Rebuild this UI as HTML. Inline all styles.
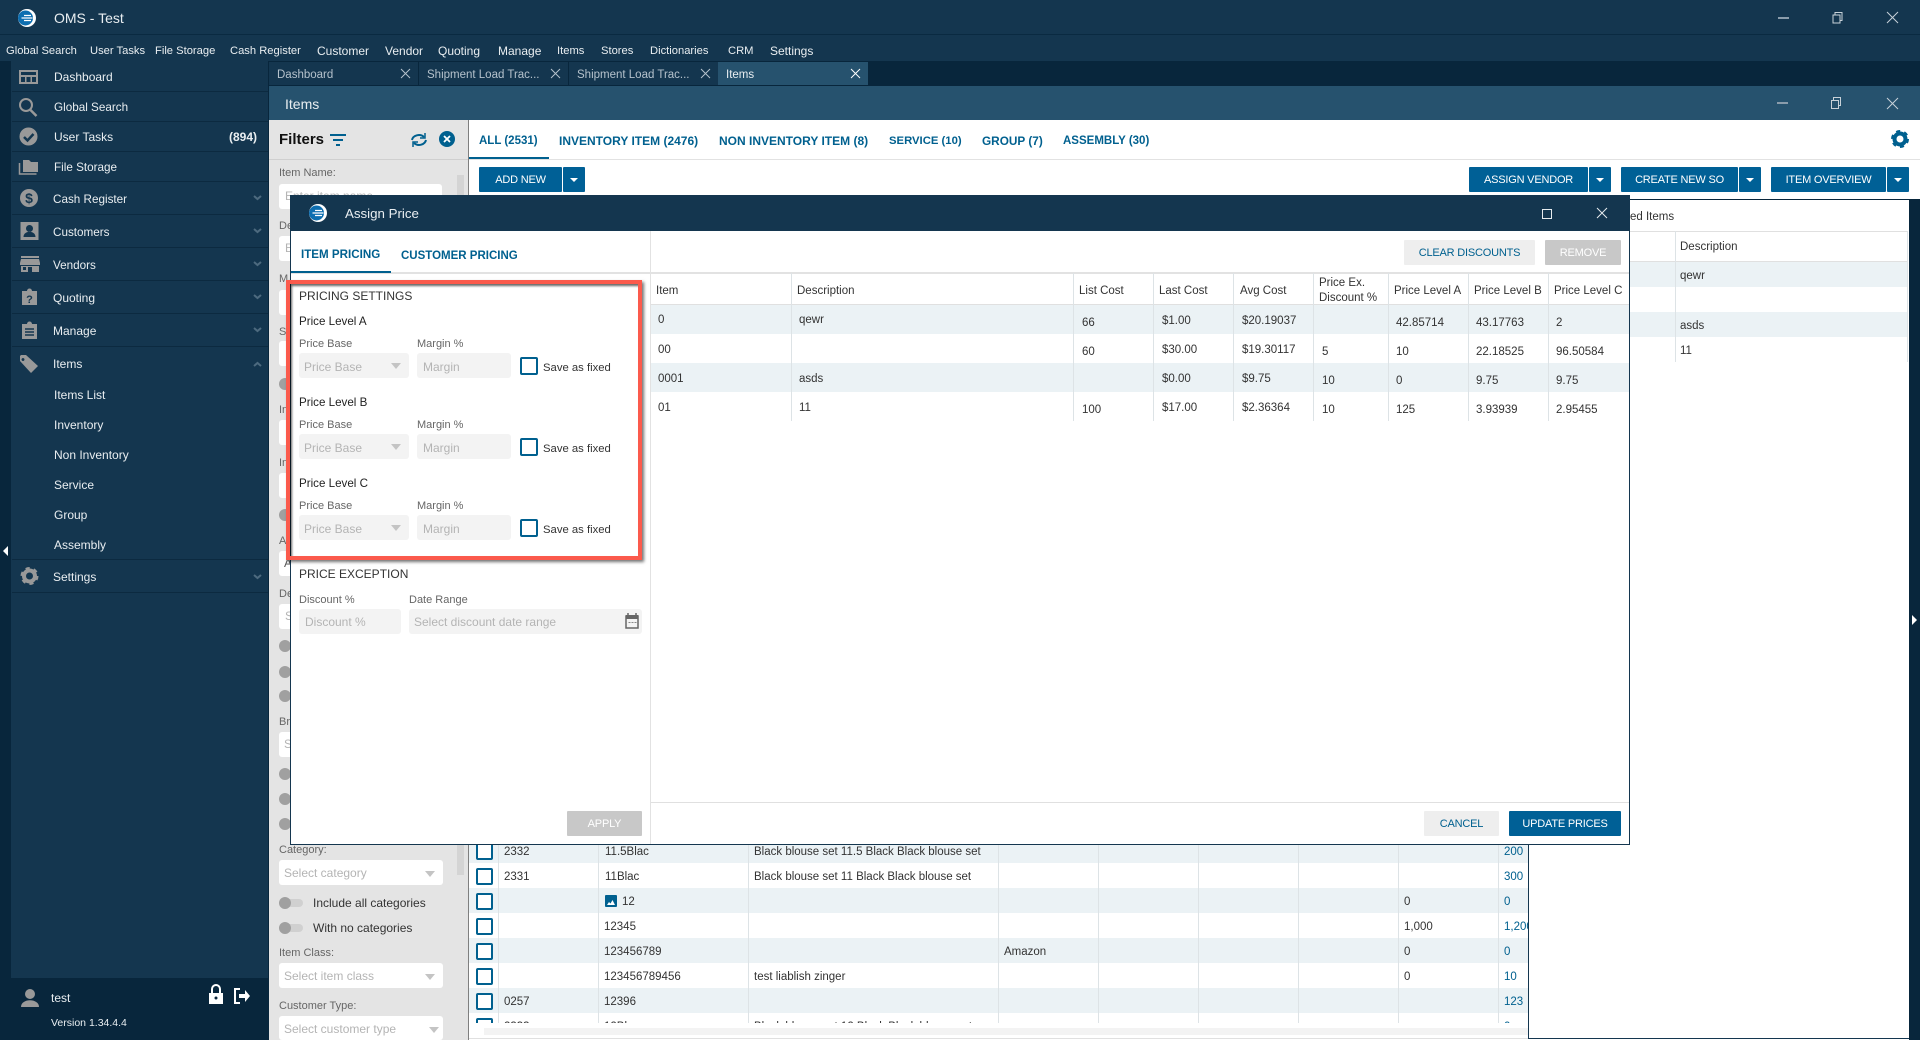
<!DOCTYPE html>
<html><head><meta charset="utf-8"><title>OMS - Test</title>
<style>
*{box-sizing:border-box}
html,body{margin:0;padding:0;width:1920px;height:1040px;overflow:hidden;background:#14364f;font-family:"Liberation Sans",sans-serif;font-size:12px}
.b,.t,svg.a{position:absolute}
.t{white-space:nowrap;line-height:16px;height:16px}
.w{color:#e9eef1}
.m{margin-top:1px;font-size:11.200px}
.mm{margin-top:1px;font-size:12px}
.bl{color:#00608f;margin-top:1px}
.tb{font-weight:bold;font-size:12px}
.g{color:#666;font-size:11px;margin-top:1px}
.d{color:#333;margin-top:1px}
.n{margin-top:0}
.ph{color:#b4b4b4}
.s{font-size:11.500px}
.sf{font-size:11.300px}
.bt{position:absolute;background:#006096;color:#fff;text-align:center;line-height:26px;height:25px;border-radius:1px;white-space:nowrap;font-size:11px;letter-spacing:-.2px}
.car{position:absolute;width:0;height:0;border-left:4px solid transparent;border-right:4px solid transparent;border-top:4px solid #fff}
.arr{position:absolute;width:0;height:0;border-left:5px solid transparent;border-right:5px solid transparent;border-top:6px solid #c4c4c4}
.inp{position:absolute;background:#fff;border-radius:3px;height:25px}
.dis{position:absolute;background:#f3f3f3;border-radius:3px;height:25px}
.cb{position:absolute;width:18px;height:18px;border:2px solid #00608f;border-radius:2px;background:#fff}
.cb2{position:absolute;width:17px;height:17px;border:2px solid #00608f;border-radius:2px;background:#fff}
.k{position:absolute;width:12px;height:12px;border-radius:50%;background:#a0a0a0}
.tr{position:absolute;width:24px;height:8px;border-radius:4px;background:#d0d0d0}
.sep{position:absolute;left:12px;width:256px;height:1px;background:#0c2a40}
.vl{position:absolute;width:1px;background:#dde3e6}
.hl{position:absolute;height:1px;background:#e0e0e0}
.tab{position:absolute;top:62px;height:23px;background:#14364f}
.tt{font-size:11.500px;margin-top:1px}
</style></head><body>

<!-- top bars -->
<div class="b" style="left:0;top:0;width:1920px;height:34px;background:#14364f"></div>
<div class="b" style="left:0;top:34px;width:1920px;height:1px;background:#0a2a41"></div>
<div class="b" style="left:0;top:61px;width:1920px;height:979px;background:#08263c"></div>
<div class="b" style="left:11px;top:61px;width:257px;height:917px;background:#14364f"></div>
<div class="b" style="left:269px;top:86px;width:1651px;height:34px;background:#26526e"></div>

<svg class="a" style="left:17px;top:8px" width="20" height="20" viewBox="0 0 20 20"><circle cx="10" cy="10" r="9" fill="#fff"/><circle cx="8.500" cy="10" r="7.500" fill="#0d6eb0"/><path d="M7 7.500h7M4.500 10h11M7 12.500h7" stroke="#fff" stroke-width="1.200"/></svg>
<div class="t w" style="left:54px;top:10px;font-size:14px">OMS - Test</div>

<svg class="a" style="left:1770px;top:8px" width="140" height="20" viewBox="0 0 140 20" fill="none" stroke="#c8d2d9" stroke-width="1"><path d="M8 10h11" stroke-width="2" stroke="#8a9cab"/><path d="M63 7h7v8h-7zM65 7V4.500h7v8h-2"/><path d="M117 4l11 11M128 4l-11 11"/></svg>

<div class="t w m" style="left:6px;top:42px">Global Search</div>
<div class="t w m" style="left:90px;top:42px">User Tasks</div>
<div class="t w m" style="left:155px;top:42px">File Storage</div>
<div class="t w m" style="left:230px;top:42px">Cash Register</div>
<div class="t w mm" style="left:317px;top:42px">Customer</div>
<div class="t w mm" style="left:385px;top:42px">Vendor</div>
<div class="t w mm" style="left:438px;top:42px">Quoting</div>
<div class="t w mm" style="left:498px;top:42px">Manage</div>
<div class="t w m" style="left:557px;top:42px">Items</div>
<div class="t w m" style="left:601px;top:42px">Stores</div>
<div class="t w m" style="left:650px;top:42px">Dictionaries</div>
<div class="t w m" style="left:728px;top:42px">CRM</div>
<div class="t w mm" style="left:770px;top:42px">Settings</div>

<!-- sidebar -->
<div class="sep" style="top:91px"></div><div class="sep" style="top:121px"></div><div class="sep" style="top:151px"></div><div class="sep" style="top:181px"></div><div class="sep" style="top:214px"></div><div class="sep" style="top:247px"></div><div class="sep" style="top:280px"></div><div class="sep" style="top:313px"></div><div class="sep" style="top:346px"></div><div class="sep" style="top:559px"></div><div class="sep" style="top:592px"></div>

<svg class="a" style="left:0;top:0" width="268" height="620" fill="#999">
<path fill-rule="evenodd" d="M19 70h19v14H19zM21 72v3h15v-3zM21 77v5h4v-5zM26.500 77v5h4v-5zM32 77v5h4v-5z"/>
<circle cx="26" cy="105" r="6" fill="none" stroke="#999" stroke-width="2"/><path d="M30.500 110l6 6" stroke="#999" stroke-width="2.500"/>
<circle cx="28.500" cy="136.500" r="9"/><path d="M24 137l3.500 3.500 6-6.500" fill="none" stroke="#14364f" stroke-width="2.500"/>
<path d="M23 160h6l2 2h7v10H23z"/><path d="M19.500 163v11h17" fill="none" stroke="#999" stroke-width="1.500"/>
<circle cx="29" cy="198" r="9"/><text x="29" y="203" font-size="14" font-weight="bold" fill="#14364f" text-anchor="middle" font-family="Liberation Sans">$</text>
<path fill-rule="evenodd" d="M20.500 222h18v18h-18zM29.500 225a3.500 3.500 0 1 0 .01 0zM23.500 237c0-7 12-7 12 0z"/>
<path d="M21 256h18v2H21zM21 259h18l1 4v2H20v-2z"/><path fill-rule="evenodd" d="M21 266h18v6h-7v-5h-4v5h-7zM23 267v3h3v-3z"/>
<path d="M22 291h5a2 2 0 0 1 5 0h5v14H22z"/><text x="29.500" y="303" font-size="11" fill="#14364f" font-weight="bold" text-anchor="middle" font-family="Liberation Sans">?</text>
<path d="M22 324h5a2 2 0 0 1 5 0h5v15H22z"/><path d="M25 329h9M25 332h9M25 335h9" stroke="#14364f" stroke-width="1.500"/>
<path fill-rule="evenodd" d="M20 356v5l11 12 7-7-12-11h-5zM23 358a1.500 1.500 0 1 0 .01 0z"/>
<circle cx="29.500" cy="576" r="5.500" fill="none" stroke="#999" stroke-width="4"/><circle cx="29.500" cy="576" r="7.500" fill="none" stroke="#999" stroke-width="3" stroke-dasharray="3.900 3.950"/>
<g fill="none" stroke="#4d6a7f" stroke-width="2"><path d="M254 196l3.500 3 3.500-3M254 229l3.500 3 3.500-3M254 262l3.500 3 3.500-3M254 295l3.500 3 3.500-3M254 328l3.500 3 3.500-3M254 366l3.500-3 3.500 3M254 575l3.500 3 3.500-3"/></g>
<path d="M8 546v10l-5-5z" fill="#fff"/>
</svg>

<div class="t w" style="left:54px;top:69px">Dashboard</div>
<div class="t w" style="left:54px;top:100px;font-size:11.700px">Global Search</div>
<div class="t w" style="left:54px;top:129px">User Tasks</div>
<div class="t w" style="left:229px;top:129px;font-weight:bold">(894)</div>
<div class="t w" style="left:54px;top:160px;font-size:11.700px">File Storage</div>
<div class="t w" style="left:53px;top:192px;font-size:11.700px">Cash Register</div>
<div class="t w" style="left:53px;top:225px;font-size:11.700px">Customers</div>
<div class="t w" style="left:53px;top:258px;font-size:11.700px">Vendors</div>
<div class="t w" style="left:53px;top:290px">Quoting</div>
<div class="t w" style="left:53px;top:323px">Manage</div>
<div class="t w" style="left:53px;top:356px">Items</div>
<div class="t w" style="left:54px;top:387px">Items List</div>
<div class="t w" style="left:54px;top:417px">Inventory</div>
<div class="t w" style="left:54px;top:447px">Non Inventory</div>
<div class="t w" style="left:54px;top:477px">Service</div>
<div class="t w" style="left:54px;top:507px">Group</div>
<div class="t w" style="left:54px;top:537px">Assembly</div>
<div class="t w" style="left:53px;top:569px">Settings</div>

<svg class="a" style="left:0;top:970px" width="268" height="70">
<circle cx="30" cy="24" r="5" fill="#999"/><path d="M21 37c0-9 18-9 18 0z" fill="#999"/>
<path d="M212 23v-4a4 4 0 0 1 8 0v4" fill="none" stroke="#fff" stroke-width="2"/><path d="M209 23h14v11h-14z" fill="#fff"/><circle cx="216" cy="28" r="1.500" fill="#08263c"/>
<path d="M240 19h-5v14h5" fill="none" stroke="#fff" stroke-width="2"/><path d="M239 24h6v-4l5 6-5 6v-4h-6z" fill="#fff"/>
</svg>
<div class="t w" style="left:51px;top:990px;font-size:12px">test</div>
<div class="t w" style="left:51px;top:1015px;font-size:10.500px">Version 1.34.4.4</div>

<!-- tabs -->
<div class="tab" style="left:269px;width:149px"></div>
<div class="tab" style="left:419px;width:149px"></div>
<div class="tab" style="left:569px;width:149px"></div>
<div class="tab" style="left:718px;width:150px;background:#26526e"></div>
<div class="t tt" style="left:277px;top:66px;color:#b5c2cc">Dashboard</div>
<div class="t tt" style="left:427px;top:66px;color:#b5c2cc">Shipment Load Trac...</div>
<div class="t tt" style="left:577px;top:66px;color:#b5c2cc">Shipment Load Trac...</div>
<div class="t w tt" style="left:726px;top:66px">Items</div>
<svg class="a" style="left:400px;top:68px" width="470" height="12" fill="none" stroke="#b5c2cc"><path d="M1 1l9 9M10 1l-9 9M151 1l9 9M160 1l-9 9M301 1l9 9M310 1l-9 9"/><path d="M451 1l9 9M460 1l-9 9" stroke="#fff"/></svg>
<div class="t w" style="left:285px;top:96px;font-size:14px">Items</div>
<svg class="a" style="left:1770px;top:93px" width="140" height="20" fill="none" stroke="#c8d2d9"><path d="M7 10h11" stroke-width="2" stroke="#8a9cab"/><path d="M61.500 7.500h7v8h-7zM63.500 7V4.500h7v8h-2"/><path d="M117 5l11 11M128 5l-11 11"/></svg>

<!-- filter panel -->
<div class="b" style="left:269px;top:120px;width:199px;height:920px;background:#e4e4e4"></div>
<div class="b" style="left:269px;top:159px;width:199px;height:1px;background:#cfcfcf"></div>
<div class="b" style="left:468px;top:120px;width:1px;height:920px;background:#7f7f7f"></div>
<div class="t" style="left:279px;top:132px;font-size:15px;font-weight:bold;color:#111">Filters</div>
<svg class="a" style="left:330px;top:133px" width="18" height="14" stroke="#00608f" stroke-width="2"><path d="M0 2h16M3 7h10M6 12h4"/></svg>
<svg class="a" style="left:410px;top:131px" width="18" height="18" fill="none" stroke="#00608f" stroke-width="2"><path d="M2 9a7 6 0 0 1 12-3M16 9a7 6 0 0 1-12 3"/><path d="M15 2v5h-5M3 16v-5h5" stroke-width="1.500"/></svg>
<svg class="a" style="left:439px;top:131px" width="16" height="16"><circle cx="8" cy="8" r="8" fill="#00608f"/><path d="M5 5l6 6M11 5l-6 6" stroke="#fff" stroke-width="1.800"/></svg>
<div class="t g" style="left:279px;top:164px">Item Name:</div>
<div class="inp" style="left:279px;top:184px;width:163px"></div>
<div class="t ph" style="left:285px;top:188px">Enter item name</div>
<div class="b" style="left:457px;top:175px;width:7px;height:700px;background:#d4d4d4"></div>
<div class="t g" style="left:279px;top:217px">De</div><div class="inp" style="left:279px;top:236px;width:163px"></div><div class="t ph" style="left:285px;top:240px">E</div>
<div class="t g" style="left:279px;top:270px">M</div><div class="inp" style="left:279px;top:290px;width:163px"></div>
<div class="t g" style="left:279px;top:323px">S</div><div class="inp" style="left:279px;top:341px;width:163px"></div>
<div class="k" style="left:279px;top:378px"></div>
<div class="t g" style="left:279px;top:401px">In</div><div class="inp" style="left:279px;top:420px;width:163px"></div>
<div class="t g" style="left:279px;top:454px">In</div><div class="inp" style="left:279px;top:473px;width:163px"></div>
<div class="k" style="left:279px;top:509px"></div>
<div class="t g" style="left:279px;top:532px">A</div><div class="inp" style="left:279px;top:551px;width:163px"></div><div class="t" style="left:284px;top:555px;color:#555">A</div>
<div class="t g" style="left:279px;top:585px">De</div><div class="inp" style="left:279px;top:604px;width:163px"></div><div class="t ph" style="left:285px;top:608px">S</div>
<div class="k" style="left:279px;top:640px"></div><div class="k" style="left:279px;top:666px"></div><div class="k" style="left:279px;top:690px"></div>
<div class="t g" style="left:279px;top:713px">Br</div><div class="inp" style="left:279px;top:732px;width:163px"></div><div class="t ph" style="left:284px;top:736px">S</div>
<div class="k" style="left:279px;top:768px"></div><div class="k" style="left:279px;top:793px"></div><div class="k" style="left:279px;top:818px"></div>
<div class="t g" style="left:279px;top:841px">Category:</div>
<div class="inp" style="left:279px;top:860px;width:164px"></div><div class="t ph" style="left:284px;top:865px">Select category</div><div class="arr" style="left:425px;top:871px"></div>
<div class="tr" style="left:279px;top:899px"></div><div class="k" style="left:279px;top:897px"></div><div class="t d n" style="left:313px;top:895px">Include all categories</div>
<div class="tr" style="left:279px;top:924px"></div><div class="k" style="left:279px;top:922px"></div><div class="t d n" style="left:313px;top:920px">With no categories</div>
<div class="t g" style="left:279px;top:944px">Item Class:</div>
<div class="inp" style="left:279px;top:963px;width:164px"></div><div class="t ph" style="left:284px;top:968px">Select item class</div><div class="arr" style="left:425px;top:974px"></div>
<div class="t g" style="left:279px;top:997px">Customer Type:</div>
<div class="inp" style="left:279px;top:1016px;width:164px;height:24px"></div><div class="t ph" style="left:284px;top:1021px">Select customer type</div><div class="arr" style="left:429px;top:1027px"></div>

<!-- main white -->
<div class="b" style="left:469px;top:120px;width:1451px;height:920px;background:#fff"></div>
<div class="b" style="left:469px;top:159px;width:1451px;height:1px;background:#e2e2e2"></div>
<div class="b" style="left:469px;top:157px;width:80px;height:2px;background:#00608f"></div>
<div class="t bl tb" style="left:479px;top:132px;font-size:11.500px">ALL (2531)</div>
<div class="t bl tb" style="left:559px;top:132px">INVENTORY ITEM (2476)</div>
<div class="t bl tb" style="left:719px;top:132px">NON INVENTORY ITEM (8)</div>
<div class="t bl tb" style="left:889px;top:132px;font-size:11.300px">SERVICE (10)</div>
<div class="t bl tb" style="left:982px;top:132px;font-size:11.800px">GROUP (7)</div>
<div class="t bl tb" style="left:1063px;top:132px;font-size:11.500px">ASSEMBLY (30)</div>
<svg class="a" style="left:1890px;top:129px" width="20" height="20"><circle cx="10" cy="10" r="5.500" fill="none" stroke="#00608f" stroke-width="4"/><circle cx="10" cy="10" r="7.500" fill="none" stroke="#00608f" stroke-width="3" stroke-dasharray="3.900 3.950"/></svg>

<div class="bt" style="left:479px;top:167px;width:83px">ADD NEW</div><div class="bt" style="left:563px;top:167px;width:22px"></div><div class="car" style="left:570px;top:178px"></div>
<div class="bt" style="left:1469px;top:167px;width:119px">ASSIGN VENDOR</div><div class="bt" style="left:1589px;top:167px;width:22px"></div><div class="car" style="left:1596px;top:178px"></div>
<div class="bt" style="left:1621px;top:167px;width:117px">CREATE NEW SO</div><div class="bt" style="left:1739px;top:167px;width:22px"></div><div class="car" style="left:1746px;top:178px"></div>
<div class="bt" style="left:1771px;top:167px;width:115px">ITEM OVERVIEW</div><div class="bt" style="left:1887px;top:167px;width:22px"></div><div class="car" style="left:1894px;top:178px"></div>

<!-- lower table -->
<div class="b" style="left:0;top:0;width:1528px;height:1023px;overflow:hidden">
<div class="b" style="left:469px;top:838px;width:1059px;height:25px;background:#ebf2f5"></div>
<div class="b" style="left:469px;top:888px;width:1059px;height:25px;background:#ebf2f5"></div>
<div class="b" style="left:469px;top:938px;width:1059px;height:25px;background:#ebf2f5"></div>
<div class="b" style="left:469px;top:988px;width:1059px;height:25px;background:#ebf2f5"></div>
<div class="vl" style="left:498px;top:838px;height:190px"></div><div class="vl" style="left:598px;top:838px;height:190px"></div><div class="vl" style="left:748px;top:838px;height:190px"></div><div class="vl" style="left:998px;top:838px;height:190px"></div><div class="vl" style="left:1098px;top:838px;height:190px"></div><div class="vl" style="left:1198px;top:838px;height:190px"></div><div class="vl" style="left:1298px;top:838px;height:190px"></div><div class="vl" style="left:1398px;top:838px;height:190px"></div><div class="vl" style="left:1498px;top:838px;height:190px"></div>
<div class="cb2" style="left:476px;top:843px"></div><div class="cb2" style="left:476px;top:868px"></div><div class="cb2" style="left:476px;top:893px"></div><div class="cb2" style="left:476px;top:918px"></div><div class="cb2" style="left:476px;top:943px"></div><div class="cb2" style="left:476px;top:968px"></div><div class="cb2" style="left:476px;top:993px"></div><div class="cb2" style="left:476px;top:1018px"></div>
<div class="t d s" style="left:504px;top:843px">2332</div><div class="t d s" style="left:605px;top:843px">11.5Blac</div><div class="t d s" style="left:754px;top:843px">Black blouse set 11.5 Black Black blouse set</div><div class="t bl s" style="left:1504px;top:843px">200</div>
<div class="t d s" style="left:504px;top:868px">2331</div><div class="t d s" style="left:605px;top:868px">11Blac</div><div class="t d s" style="left:754px;top:868px">Black blouse set 11 Black Black blouse set</div><div class="t bl s" style="left:1504px;top:868px">300</div>
<svg class="a" style="left:605px;top:895px" width="12" height="12"><rect width="12" height="12" rx="1" fill="#00608f"/><path d="M2 10l2-3 1.500 1.500L7.500 5 10 10z" fill="#fff"/></svg>
<div class="t d s" style="left:622px;top:893px">12</div><div class="t d s" style="left:1404px;top:893px">0</div><div class="t bl s" style="left:1504px;top:893px">0</div>
<div class="t d s" style="left:604px;top:918px">12345</div><div class="t d s" style="left:1404px;top:918px">1,000</div><div class="t bl s" style="left:1504px;top:918px">1,200</div>
<div class="t d s" style="left:604px;top:943px">123456789</div><div class="t d s" style="left:1004px;top:943px">Amazon</div><div class="t d s" style="left:1404px;top:943px">0</div><div class="t bl s" style="left:1504px;top:943px">0</div>
<div class="t d s" style="left:604px;top:968px">123456789456</div><div class="t d s" style="left:754px;top:968px">test liablish zinger</div><div class="t d s" style="left:1404px;top:968px">0</div><div class="t bl s" style="left:1504px;top:968px">10</div>
<div class="t d s" style="left:504px;top:993px">0257</div><div class="t d s" style="left:604px;top:993px">12396</div><div class="t bl s" style="left:1504px;top:993px">123</div>
<div class="t d s" style="left:504px;top:1018px">2333</div><div class="t d s" style="left:604px;top:1018px">12Bl</div><div class="t d s" style="left:754px;top:1018px">Black blouse set 12 Black Black blouse set</div><div class="t bl s" style="left:1504px;top:1018px">0</div>
</div>
<div class="b" style="left:484px;top:1028px;width:1044px;height:7px;background:#f3f3f3"></div>
<div class="b" style="left:469px;top:1038px;width:1060px;height:1px;background:#e0e0e0"></div>

<!-- right panel -->
<div class="b" style="left:1909px;top:199px;width:11px;height:841px;background:#08263c"></div>
<div class="b" style="left:1528px;top:199px;width:381px;height:840px;background:#fff;border-left:1px solid #14364f;border-bottom:1px solid #14364f"></div>
<div class="b" style="left:1529px;top:199px;width:391px;height:1px;background:#08263c"></div>
<div class="t d s" style="left:1630px;top:208px">ed Items</div>
<div class="hl" style="left:1630px;top:231px;width:277px"></div><div class="hl" style="left:1630px;top:261px;width:277px"></div>
<div class="b" style="left:1630px;top:262px;width:277px;height:25px;background:#ebf2f5"></div>
<div class="b" style="left:1630px;top:312px;width:277px;height:25px;background:#ebf2f5"></div>
<div class="vl" style="left:1675px;top:231px;height:131px"></div><div class="vl" style="left:1907px;top:231px;height:131px"></div>
<div class="t d s" style="left:1680px;top:238px">Description</div>
<div class="t d s" style="left:1680px;top:267px">qewr</div>
<div class="t d s" style="left:1680px;top:317px">asds</div>
<div class="t d s" style="left:1680px;top:342px">11</div>
<svg class="a" style="left:1911px;top:614px" width="8" height="12"><path d="M1 1v10l5-5z" fill="#fff"/></svg>

<!-- modal -->
<div class="b" style="left:290px;top:195px;width:1340px;height:650px;background:#fff;border:1px solid #14364f"></div>
<div class="b" style="left:290px;top:195px;width:1340px;height:36px;background:#14364f"></div>
<svg class="a" style="left:308px;top:203px" width="20" height="20" viewBox="0 0 20 20"><circle cx="10" cy="10" r="9" fill="#fff"/><circle cx="8.500" cy="10" r="7.500" fill="#0d6eb0"/><path d="M7 7.500h7M4.500 10h11M7 12.500h7" stroke="#fff" stroke-width="1.200"/></svg>
<div class="t w" style="left:345px;top:206px;font-size:13.300px">Assign Price</div>
<svg class="a" style="left:1540px;top:207px" width="70" height="13" fill="none" stroke="#e6ebee"><path d="M2.500 2.500h9v9h-9z"/><path d="M57 1l10 10M67 1l-10 10"/></svg>
<div class="b" style="left:650px;top:231px;width:1px;height:613px;background:#e2e2e2"></div>
<div class="b" style="left:291px;top:272px;width:1338px;height:1.500px;background:#e2e2e2"></div>
<div class="b" style="left:291px;top:271px;width:100px;height:2px;background:#00608f"></div>
<div class="t bl" style="left:301px;top:246px;font-weight:bold;font-size:11.600px">ITEM PRICING</div>
<div class="t bl" style="left:401px;top:247px;font-weight:bold;font-size:11.500px">CUSTOMER PRICING</div>

<div class="t d" style="left:299px;top:287px;font-size:12px">PRICING SETTINGS</div>
<div class="t d n" style="left:299px;top:314px;color:#222;font-size:11.600px">Price Level A</div>
<div class="t g" style="left:299px;top:335px">Price Base</div><div class="t g" style="left:417px;top:335px">Margin %</div>
<div class="dis" style="left:299px;top:353px;width:110px"></div><div class="t ph" style="left:304px;top:359px">Price Base</div><div class="arr" style="left:391px;top:363px"></div>
<div class="dis" style="left:417px;top:353px;width:94px"></div><div class="t ph" style="left:423px;top:359px">Margin</div>
<div class="cb" style="left:520px;top:357px"></div><div class="t d sf" style="left:543px;top:359px">Save as fixed</div>

<div class="t d n" style="left:299px;top:395px;color:#222;font-size:11.600px">Price Level B</div>
<div class="t g" style="left:299px;top:416px">Price Base</div><div class="t g" style="left:417px;top:416px">Margin %</div>
<div class="dis" style="left:299px;top:434px;width:110px"></div><div class="t ph" style="left:304px;top:440px">Price Base</div><div class="arr" style="left:391px;top:444px"></div>
<div class="dis" style="left:417px;top:434px;width:94px"></div><div class="t ph" style="left:423px;top:440px">Margin</div>
<div class="cb" style="left:520px;top:438px"></div><div class="t d sf" style="left:543px;top:440px">Save as fixed</div>

<div class="t d n" style="left:299px;top:476px;color:#222;font-size:11.600px">Price Level C</div>
<div class="t g" style="left:299px;top:497px">Price Base</div><div class="t g" style="left:417px;top:497px">Margin %</div>
<div class="dis" style="left:299px;top:515px;width:110px"></div><div class="t ph" style="left:304px;top:521px">Price Base</div><div class="arr" style="left:391px;top:525px"></div>
<div class="dis" style="left:417px;top:515px;width:94px"></div><div class="t ph" style="left:423px;top:521px">Margin</div>
<div class="cb" style="left:520px;top:519px"></div><div class="t d sf" style="left:543px;top:521px">Save as fixed</div>

<div class="t d n" style="left:299px;top:566px;font-size:12px">PRICE EXCEPTION</div>
<div class="t g" style="left:299px;top:591px">Discount %</div><div class="t g" style="left:409px;top:591px">Date Range</div>
<div class="dis" style="left:299px;top:609px;width:102px"></div><div class="t ph" style="left:305px;top:614px">Discount %</div>
<div class="dis" style="left:409px;top:609px;width:233px"></div><div class="t ph" style="left:414px;top:614px">Select discount date range</div>
<svg class="a" style="left:625px;top:613px" width="14" height="16"><path d="M1 3h12v12H1z" fill="none" stroke="#666" stroke-width="1.500"/><path d="M1 2h12v4H1z" fill="#666"/><path d="M3 0v3M11 0v3" stroke="#666" stroke-width="1.500"/><path d="M3.500 9.500h2M6.500 9.500h2M9.500 9.500h2" stroke="#888"/></svg>

<div class="bt" style="left:567px;top:811px;width:75px;background:#c8c8c8">APPLY</div>

<!-- clear/remove -->
<div class="bt" style="left:1404px;top:240px;width:131px;background:#eee;color:#00608f">CLEAR DISCOUNTS</div>
<div class="bt" style="left:1545px;top:240px;width:76px;background:#c8c8c8">REMOVE</div>

<!-- modal table -->
<div class="hl" style="left:651px;top:304px;width:978px"></div>
<div class="b" style="left:651px;top:305px;width:978px;height:29px;background:#ebf2f5"></div>
<div class="b" style="left:651px;top:363px;width:978px;height:29px;background:#ebf2f5"></div>
<div class="vl" style="left:791px;top:273px;height:148px"></div><div class="vl" style="left:1073px;top:273px;height:148px"></div><div class="vl" style="left:1153px;top:273px;height:148px"></div><div class="vl" style="left:1233px;top:273px;height:148px"></div><div class="vl" style="left:1313px;top:273px;height:148px"></div><div class="vl" style="left:1388px;top:273px;height:148px"></div><div class="vl" style="left:1468px;top:273px;height:148px"></div><div class="vl" style="left:1548px;top:273px;height:148px"></div>
<div class="t d s" style="left:656px;top:282px">Item</div>
<div class="t d s" style="left:797px;top:282px">Description</div>
<div class="t d s" style="left:1079px;top:282px">List Cost</div>
<div class="t d s" style="left:1159px;top:282px">Last Cost</div>
<div class="t d s" style="left:1240px;top:282px">Avg Cost</div>
<div class="t d s" style="left:1319px;top:274px">Price Ex.</div>
<div class="t d s" style="left:1319px;top:289px">Discount %</div>
<div class="t d s" style="left:1394px;top:282px">Price Level A</div>
<div class="t d s" style="left:1474px;top:282px">Price Level B</div>
<div class="t d s" style="left:1554px;top:282px">Price Level C</div>

<div class="t d s" style="left:658px;top:311px">0</div><div class="t d s" style="left:799px;top:311px">qewr</div><div class="t d s" style="left:1082px;top:314px">66</div><div class="t d s" style="left:1162px;top:312px">$1.00</div><div class="t d s" style="left:1242px;top:312px">$20.19037</div><div class="t d s" style="left:1396px;top:314px">42.85714</div><div class="t d s" style="left:1476px;top:314px">43.17763</div><div class="t d s" style="left:1556px;top:314px">2</div>
<div class="t d s" style="left:658px;top:341px">00</div><div class="t d s" style="left:1082px;top:343px">60</div><div class="t d s" style="left:1162px;top:341px">$30.00</div><div class="t d s" style="left:1242px;top:341px">$19.30117</div><div class="t d s" style="left:1322px;top:343px">5</div><div class="t d s" style="left:1396px;top:343px">10</div><div class="t d s" style="left:1476px;top:343px">22.18525</div><div class="t d s" style="left:1556px;top:343px">96.50584</div>
<div class="t d s" style="left:658px;top:370px">0001</div><div class="t d s" style="left:799px;top:370px">asds</div><div class="t d s" style="left:1162px;top:370px">$0.00</div><div class="t d s" style="left:1242px;top:370px">$9.75</div><div class="t d s" style="left:1322px;top:372px">10</div><div class="t d s" style="left:1396px;top:372px">0</div><div class="t d s" style="left:1476px;top:372px">9.75</div><div class="t d s" style="left:1556px;top:372px">9.75</div>
<div class="t d s" style="left:658px;top:399px">01</div><div class="t d s" style="left:799px;top:399px">11</div><div class="t d s" style="left:1082px;top:401px">100</div><div class="t d s" style="left:1162px;top:399px">$17.00</div><div class="t d s" style="left:1242px;top:399px">$2.36364</div><div class="t d s" style="left:1322px;top:401px">10</div><div class="t d s" style="left:1396px;top:401px">125</div><div class="t d s" style="left:1476px;top:401px">3.93939</div><div class="t d s" style="left:1556px;top:401px">2.95455</div>

<div class="hl" style="left:651px;top:802px;width:978px"></div>
<div class="bt" style="left:1424px;top:811px;width:75px;background:#eee;color:#00608f">CANCEL</div>
<div class="bt" style="left:1509px;top:811px;width:112px">UPDATE PRICES</div>

<!-- red highlight -->
<div class="b" style="left:286px;top:280px;width:356px;height:280px;border:4px solid #fb5a4c;box-shadow:2px 2px 3px rgba(0,0,0,.55),inset 2px 2px 2px rgba(0,0,0,.6)"></div>

</body></html>
